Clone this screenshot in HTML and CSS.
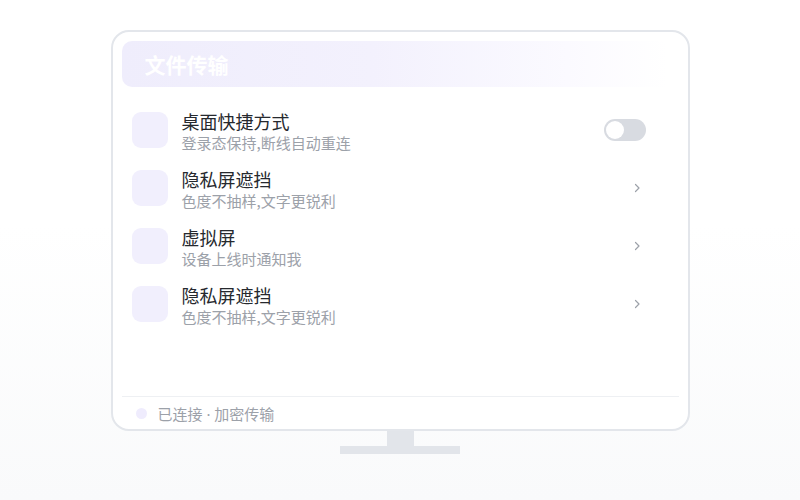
FILE: index.html
```html
<!DOCTYPE html>
<html lang="zh-CN">
<head>
<meta charset="utf-8">
<title>文件传输</title>
<link rel="stylesheet" href="styles.css">
</head>
<body>
<div class="stage">
  <div class="monitor">
    <div class="screen">
      <div class="header"><span class="header-title">文件传输</span></div>
      <ul class="list">
        <li class="row">
          <span class="icon"></span>
          <div class="text">
            <div class="title">桌面快捷方式</div>
            <div class="sub">登录态保持,断线自动重连</div>
          </div>
          <span class="toggle"><span class="knob"></span></span>
        </li>
        <li class="row">
          <span class="icon"></span>
          <div class="text">
            <div class="title">隐私屏遮挡</div>
            <div class="sub">色度不抽样,文字更锐利</div>
          </div>
          <svg class="chev" width="8" height="12" viewBox="0 0 8 12"><path d="M2.5 2.5l3.5 3.5-3.5 3.5" fill="none" stroke="#9ca1a9" stroke-width="1.2" stroke-linecap="round" stroke-linejoin="round"/></svg>
        </li>
        <li class="row">
          <span class="icon"></span>
          <div class="text">
            <div class="title">虚拟屏</div>
            <div class="sub">设备上线时通知我</div>
          </div>
          <svg class="chev" width="8" height="12" viewBox="0 0 8 12"><path d="M2.5 2.5l3.5 3.5-3.5 3.5" fill="none" stroke="#9ca1a9" stroke-width="1.2" stroke-linecap="round" stroke-linejoin="round"/></svg>
        </li>
        <li class="row">
          <span class="icon"></span>
          <div class="text">
            <div class="title">隐私屏遮挡</div>
            <div class="sub">色度不抽样,文字更锐利</div>
          </div>
          <svg class="chev" width="8" height="12" viewBox="0 0 8 12"><path d="M2.5 2.5l3.5 3.5-3.5 3.5" fill="none" stroke="#9ca1a9" stroke-width="1.2" stroke-linecap="round" stroke-linejoin="round"/></svg>
        </li>
      </ul>
      <div class="footer">
        <span class="dot"></span>
        <span class="status">已连接 · 加密传输</span>
      </div>
    </div>
    <div class="neck"></div>
    <div class="base"></div>
  </div>
</div>
</body>
</html>
```

FILE: styles.css
```css
* { box-sizing: border-box; }
html, body { margin: 0; padding: 0; }
body {
  width: 800px;
  height: 500px;
  overflow: hidden;
  background: linear-gradient(#ffffff 0%, #ffffff 45%, #f9fafb 100%);
  font-family: "Noto Sans CJK SC", "Noto Sans", sans-serif;
}
.stage {
  display: flex;
  justify-content: center;
  padding-top: 30px;
}
.monitor {
  display: flex;
  flex-direction: column;
  align-items: center;
}
.screen {
  width: 579px;
  height: 401px;
  border: 2px solid #e3e6eb;
  border-radius: 18px;
  background: #ffffff;
  padding: 9px 9px 0 9px;
  display: flex;
  flex-direction: column;
}
.header {
  height: 46px;
  border-radius: 10px;
  background: linear-gradient(90deg, #efedfc 0%, #f3f1fd 45%, #fbfaff 80%, #ffffff 98%);
  display: flex;
  align-items: center;
  padding-left: 23px;
}
.header-title {
  color: #ffffff;
  font-size: 21px;
  font-weight: 700;
}
.list {
  list-style: none;
  margin: 14px 0 0 0;
  padding: 0;
  flex: 1;
}
.row {
  height: 58px;
  display: flex;
  align-items: center;
  padding-left: 10px;
}
.icon {
  width: 36px;
  height: 36px;
  border-radius: 9px;
  background: #f1effd;
  flex: none;
}
.text {
  margin-left: 14px;
  flex: 1;
  display: flex;
  flex-direction: column;
  padding-top: 4px;
}
.title {
  font-size: 18px;
  line-height: 22px;
  color: #26292e;
}
.sub {
  font-size: 15px;
  line-height: 22px;
  color: #9ca1a9;
}
.toggle {
  width: 42px;
  height: 22px;
  border-radius: 11px;
  background: #d8dbe1;
  margin-right: 33px;
  position: relative;
  flex: none;
}
.knob {
  position: absolute;
  left: 2px;
  top: 2px;
  width: 18px;
  height: 18px;
  border-radius: 50%;
  background: #ffffff;
}
.chev {
  margin-right: 38px;
  flex: none;
}
.footer {
  border-top: 1px solid #eef0f3;
  height: 33px;
  display: flex;
  align-items: center;
  padding-left: 14px;
}
.dot {
  width: 11px;
  height: 11px;
  border-radius: 50%;
  background: #efecfd;
}
.status {
  margin-left: 11px;
  font-size: 15px;
  color: #9ca1a9;
  font-family: "Noto Sans", "Noto Sans CJK SC", sans-serif;
}
.neck {
  width: 27px;
  height: 15px;
  background: #e2e5ea;
}
.base {
  width: 120px;
  height: 8px;
  background: #e2e5ea;
}
```
